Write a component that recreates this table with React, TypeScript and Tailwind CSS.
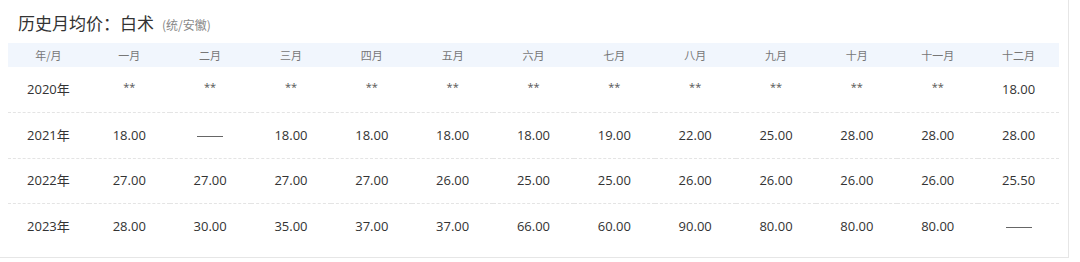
const months = ["一月", "二月", "三月", "四月", "五月", "六月", "七月", "八月", "九月", "十月", "十一月", "十二月"];

const rows = [
  { year: "2020年", values: ["**", "**", "**", "**", "**", "**", "**", "**", "**", "**", "**", "18.00"] },
  { year: "2021年", values: ["18.00", "——", "18.00", "18.00", "18.00", "18.00", "19.00", "22.00", "25.00", "28.00", "28.00", "28.00"] },
  { year: "2022年", values: ["27.00", "27.00", "27.00", "27.00", "26.00", "25.00", "25.00", "26.00", "26.00", "26.00", "26.00", "25.50"] },
  { year: "2023年", values: ["28.00", "30.00", "35.00", "37.00", "37.00", "66.00", "60.00", "90.00", "80.00", "80.00", "80.00", "——"] },
];

const App = () => {
  return (
    <div className="w-[1080px] h-[262px] bg-white font-['Open_Sans','Noto_Sans_CJK_SC',sans-serif]">
      <div className="w-[1069px] h-[258px] border-r border-b border-[#e6e6e6] pl-2 pr-[9px]">
        <div className="flex items-baseline h-[43px] pt-[10px] pl-[10px]">
          <span className="text-[17px] text-[#333] font-['Noto_Sans_CJK_SC',sans-serif]">历史月均价：白术</span>
          <span className="ml-[8px] text-[12px] text-[#888] font-['Noto_Sans_CJK_SC',sans-serif]">(统/安徽)</span>
        </div>
        <table className="w-full table-fixed border-collapse">
          <thead>
            <tr className="h-6 bg-[#f1f6fd]">
              <th className="font-normal text-[11px] text-[#777] font-['Noto_Sans_CJK_SC',sans-serif]">年/月</th>
              {months.map((m) => (
                <th key={m} className="font-normal text-[11px] text-[#777] font-['Noto_Sans_CJK_SC',sans-serif]">{m}</th>
              ))}
            </tr>
          </thead>
          <tbody>
            {rows.map((row, i) => (
              <tr key={row.year} className={i < rows.length - 1 ? "h-[45.5px] border-b border-dashed border-[#e4e4e4]" : "h-[45px]"}>
                <td className="text-center text-[13px] text-[#333]">{row.year}</td>
                {row.values.map((v, j) => (
                  <td key={j} className={v === "**" ? "text-center text-[11px] text-[#555] pb-1" : "text-center text-[13px] text-[#333]"}>
                    {v === "——" ? <span className="inline-block w-[26px] h-px bg-[#666] align-middle" /> : v}
                  </td>
                ))}
              </tr>
            ))}
          </tbody>
        </table>
      </div>
    </div>
  );
};

export default App;
